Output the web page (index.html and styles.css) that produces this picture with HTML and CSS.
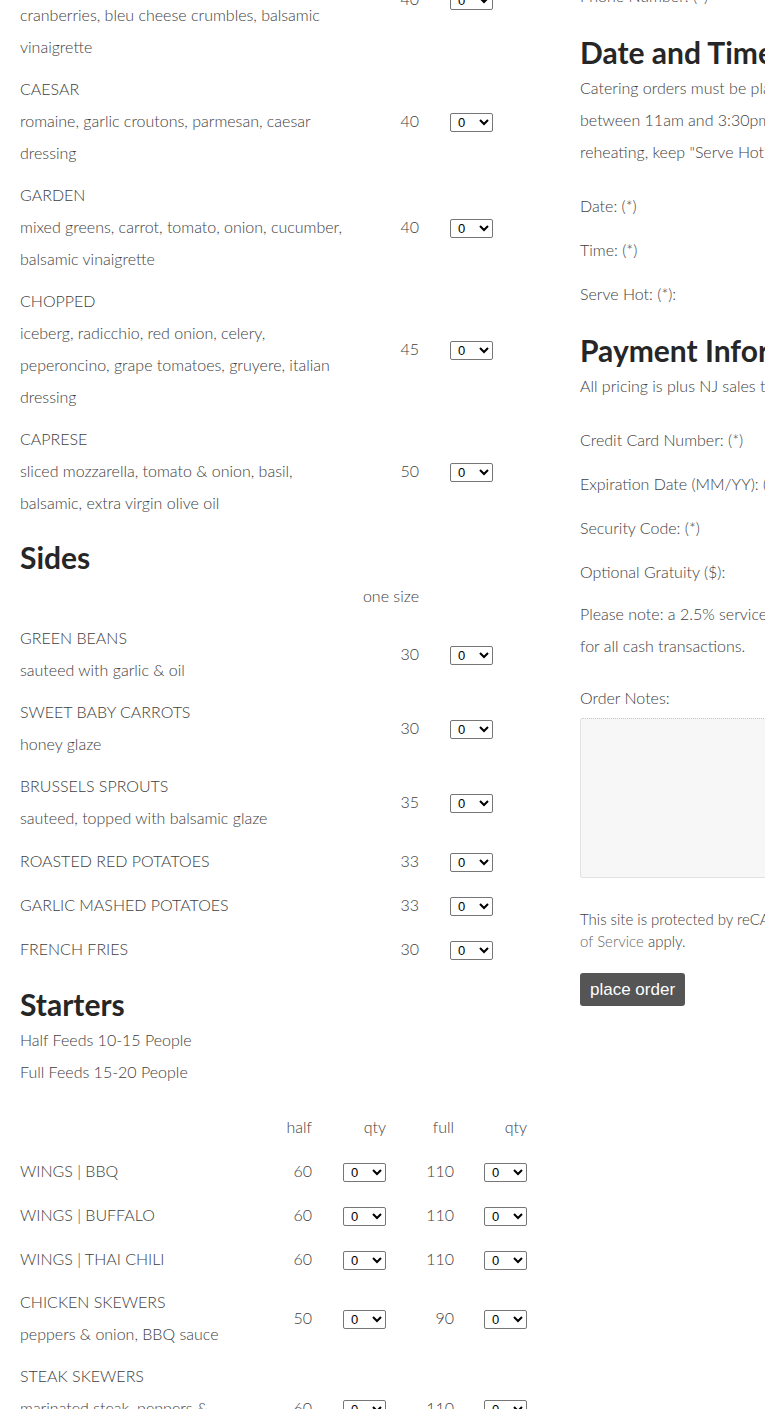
FILE: index.html
```html
<!DOCTYPE html>
<html lang="en">
<head>
<meta charset="utf-8">
<title>Catering Order</title>
<link rel="stylesheet" href="styles.css">
</head>
<body>
<div class="page">
  <div class="col-left">
    <div class="menu-row">
      <div class="item"><div class="name">HARVEST</div><div class="desc">spring mix, candied pecans, goat cheese, dried cranberries, bleu cheese crumbles, balsamic vinaigrette</div></div>
      <div class="price">40</div>
      <div class="qty"><select class="sel"><option>0</option><option>1</option><option>2</option><option>3</option><option>4</option><option>5</option></select></div>
    </div>
    <div class="menu-row">
      <div class="item"><div class="name">CAESAR</div><div class="desc">romaine, garlic croutons, parmesan, caesar dressing</div></div>
      <div class="price">40</div>
      <div class="qty"><select class="sel"><option>0</option><option>1</option><option>2</option><option>3</option><option>4</option><option>5</option></select></div>
    </div>
    <div class="menu-row">
      <div class="item"><div class="name">GARDEN</div><div class="desc">mixed greens, carrot, tomato, onion, cucumber, balsamic vinaigrette</div></div>
      <div class="price">40</div>
      <div class="qty"><select class="sel"><option>0</option><option>1</option><option>2</option><option>3</option><option>4</option><option>5</option></select></div>
    </div>
    <div class="menu-row">
      <div class="item"><div class="name">CHOPPED</div><div class="desc">iceberg, radicchio, red onion, celery, peperoncino, grape tomatoes, gruyere, italian dressing</div></div>
      <div class="price">45</div>
      <div class="qty"><select class="sel"><option>0</option><option>1</option><option>2</option><option>3</option><option>4</option><option>5</option></select></div>
    </div>
    <div class="menu-row">
      <div class="item"><div class="name">CAPRESE</div><div class="desc">sliced mozzarella, tomato &amp; onion, basil, balsamic, extra virgin olive oil</div></div>
      <div class="price">50</div>
      <div class="qty"><select class="sel"><option>0</option><option>1</option><option>2</option><option>3</option><option>4</option><option>5</option></select></div>
    </div>

    <h2 class="section-title">Sides</h2>
    <div class="menu-row head-row">
      <div class="item"></div>
      <div class="price">one size</div>
      <div class="qty"></div>
    </div>
    <div class="menu-row">
      <div class="item"><div class="name">GREEN BEANS</div><div class="desc">sauteed with garlic &amp; oil</div></div>
      <div class="price">30</div>
      <div class="qty"><select class="sel"><option>0</option><option>1</option><option>2</option><option>3</option><option>4</option><option>5</option></select></div>
    </div>
    <div class="menu-row">
      <div class="item"><div class="name">SWEET BABY CARROTS</div><div class="desc">honey glaze</div></div>
      <div class="price">30</div>
      <div class="qty"><select class="sel"><option>0</option><option>1</option><option>2</option><option>3</option><option>4</option><option>5</option></select></div>
    </div>
    <div class="menu-row">
      <div class="item"><div class="name">BRUSSELS SPROUTS</div><div class="desc">sauteed, topped with balsamic glaze</div></div>
      <div class="price">35</div>
      <div class="qty"><select class="sel"><option>0</option><option>1</option><option>2</option><option>3</option><option>4</option><option>5</option></select></div>
    </div>
    <div class="menu-row">
      <div class="item"><div class="name">ROASTED RED POTATOES</div></div>
      <div class="price">33</div>
      <div class="qty"><select class="sel"><option>0</option><option>1</option><option>2</option><option>3</option><option>4</option><option>5</option></select></div>
    </div>
    <div class="menu-row">
      <div class="item"><div class="name">GARLIC MASHED POTATOES</div></div>
      <div class="price">33</div>
      <div class="qty"><select class="sel"><option>0</option><option>1</option><option>2</option><option>3</option><option>4</option><option>5</option></select></div>
    </div>
    <div class="menu-row">
      <div class="item"><div class="name">FRENCH FRIES</div></div>
      <div class="price">30</div>
      <div class="qty"><select class="sel"><option>0</option><option>1</option><option>2</option><option>3</option><option>4</option><option>5</option></select></div>
    </div>

    <h2 class="section-title">Starters</h2>
    <p class="intro">Half Feeds 10-15 People<br>Full Feeds 15-20 People</p>
    <div class="start-row head-row">
      <div class="item"></div>
      <div class="price">half</div>
      <div class="qty">qty</div>
      <div class="price">full</div>
      <div class="qty">qty</div>
    </div>
    <div class="start-row">
      <div class="item"><div class="name">WINGS | BBQ</div></div>
      <div class="price">60</div>
      <div class="qty"><select class="sel"><option>0</option><option>1</option><option>2</option><option>3</option><option>4</option><option>5</option></select></div>
      <div class="price">110</div>
      <div class="qty"><select class="sel"><option>0</option><option>1</option><option>2</option><option>3</option><option>4</option><option>5</option></select></div>
    </div>
    <div class="start-row">
      <div class="item"><div class="name">WINGS | BUFFALO</div></div>
      <div class="price">60</div>
      <div class="qty"><select class="sel"><option>0</option><option>1</option><option>2</option><option>3</option><option>4</option><option>5</option></select></div>
      <div class="price">110</div>
      <div class="qty"><select class="sel"><option>0</option><option>1</option><option>2</option><option>3</option><option>4</option><option>5</option></select></div>
    </div>
    <div class="start-row">
      <div class="item"><div class="name">WINGS | THAI CHILI</div></div>
      <div class="price">60</div>
      <div class="qty"><select class="sel"><option>0</option><option>1</option><option>2</option><option>3</option><option>4</option><option>5</option></select></div>
      <div class="price">110</div>
      <div class="qty"><select class="sel"><option>0</option><option>1</option><option>2</option><option>3</option><option>4</option><option>5</option></select></div>
    </div>
    <div class="start-row">
      <div class="item"><div class="name">CHICKEN SKEWERS</div><div class="desc">peppers &amp; onion, BBQ sauce</div></div>
      <div class="price">50</div>
      <div class="qty"><select class="sel"><option>0</option><option>1</option><option>2</option><option>3</option><option>4</option><option>5</option></select></div>
      <div class="price">90</div>
      <div class="qty"><select class="sel"><option>0</option><option>1</option><option>2</option><option>3</option><option>4</option><option>5</option></select></div>
    </div>
    <div class="start-row">
      <div class="item"><div class="name">STEAK SKEWERS</div><div class="desc">marinated steak, peppers &amp; onion, chimichurri</div></div>
      <div class="price">60</div>
      <div class="qty"><select class="sel"><option>0</option><option>1</option><option>2</option><option>3</option><option>4</option><option>5</option></select></div>
      <div class="price">110</div>
      <div class="qty"><select class="sel"><option>0</option><option>1</option><option>2</option><option>3</option><option>4</option><option>5</option></select></div>
    </div>
  </div>

  <div class="col-right">
    <div class="field"><label>Email: (*)</label><input type="text"></div>
    <div class="field"><label>Phone Number: (*)</label><input type="text"></div>

    <h2 class="section-title">Date and Time</h2>
    <p class="note">Catering orders must be placed at least 24 hours in advance and can be picked up<br>between 11am and 3:30pm. Orders are packed ready to eat; if you are planning on<br>reheating, keep "Serve Hot" unchecked.</p>
    <div class="field"><label>Date: (*)</label><input type="text"></div>
    <div class="field"><label>Time: (*)</label><input type="text"></div>
    <div class="field"><label>Serve Hot: (*):</label><input type="checkbox"></div>

    <h2 class="section-title">Payment Information</h2>
    <p class="note">All pricing is plus NJ sales tax.</p>
    <div class="field"><label>Credit Card Number: (*)</label><input type="text"></div>
    <div class="field"><label>Expiration Date (MM/YY): (*)</label><input type="text"></div>
    <div class="field"><label>Security Code: (*)</label><input type="text"></div>
    <div class="field"><label>Optional Gratuity ($):</label><input type="text"></div>
    <p class="note fee">Please note: a 2.5% service fee will be added to all credit card orders, and waived<br>for all cash transactions.</p>

    <label class="notes-label">Order Notes:</label>
    <textarea class="notes"></textarea>

    <p class="recaptcha">This site is protected by reCAPTCHA and the Google <a href="#">Privacy Policy</a> and <a href="#">Terms</a><br><a href="#">of Service</a> apply.</p>
    <button class="submit" type="button">place order</button>
  </div>
</div>
</body>
</html>
```

FILE: styles.css
```css
html, body {
  margin: 0;
  padding: 0;
  overflow: hidden;
  background: #fff;
}

body {
  font-family: "Lato", "Open Sans", sans-serif;
  font-weight: 300;
  font-size: 16px;
  line-height: 32px;
  color: #404040;
}

.page {
  width: 1140px;
  margin-top: -70px;
  padding-left: 20px;
  display: flex;
  gap: 40px;
  align-items: flex-start;
}

.col-left {
  width: 520px;
  flex: none;
}

.col-right {
  width: 560px;
  flex: none;
}

.section-title {
  margin: 16px 0 2px;
  font-size: 30px;
  line-height: 36px;
  font-weight: 700;
  color: #262626;
}

.col-left .section-title {
  margin: 15px 0 2px;
}

.menu-row {
  display: grid;
  grid-template-columns: 330px 69px 74px;
  padding: 5px 0;
}

.menu-row.head-row {
  padding: 3px 0 5px;
}

.start-row {
  display: grid;
  grid-template-columns: 215px 77px 74px 68px 73px;
  padding: 5px 0;
}

.start-row.head-row {
  padding: 5px 0 6px;
}

.item {
  align-self: center;
}

.price {
  text-align: right;
  align-self: center;
}

.qty {
  min-height: 34px;
  display: flex;
  align-items: center;
  justify-content: flex-end;
}

.head-row .qty {
  min-height: 0;
}

.sel {
  width: 43px;
  height: 19px;
  font-family: "Liberation Sans", Arial, sans-serif;
  font-size: 13px;
  margin: 2px 0 0;
  padding: 0 0 0 3px;
  color: #000;
  background: #fff;
  border: 1px solid #767676;
  border-radius: 2px;
}

.intro {
  margin: 0 0 18px;
}

.field {
  display: grid;
  grid-template-columns: 240px 280px;
  align-items: center;
  min-height: 44px;
}

.field input[type="text"] {
  height: 28px;
  border: 1px solid #ddd;
  background: #f7f7f7;
}

.note {
  margin: 0 0 16px;
  white-space: nowrap;
}

.note.fee {
  margin: 4px 0 20px;
}

.notes-label {
  display: block;
}

.notes {
  display: block;
  box-sizing: border-box;
  width: 540px;
  height: 160px;
  margin: 4px 0 0;
  background: #f7f7f7;
  border: 1px solid #e2e2e2;
  border-top: 1px dotted #c4c4c4;
  border-radius: 3px;
  resize: none;
}

.recaptcha {
  margin: 30px 0 21px;
  font-size: 15px;
  line-height: 22px;
  white-space: nowrap;
}

.recaptcha a {
  color: #6a6a6a;
  text-decoration: none;
}

.submit {
  display: block;
  height: 33px;
  padding: 0 10px;
  background: #555;
  color: #fff;
  border: none;
  border-radius: 3px;
  font-family: "Liberation Sans", Arial, sans-serif;
  font-size: 17px;
  line-height: 33px;
}
```
